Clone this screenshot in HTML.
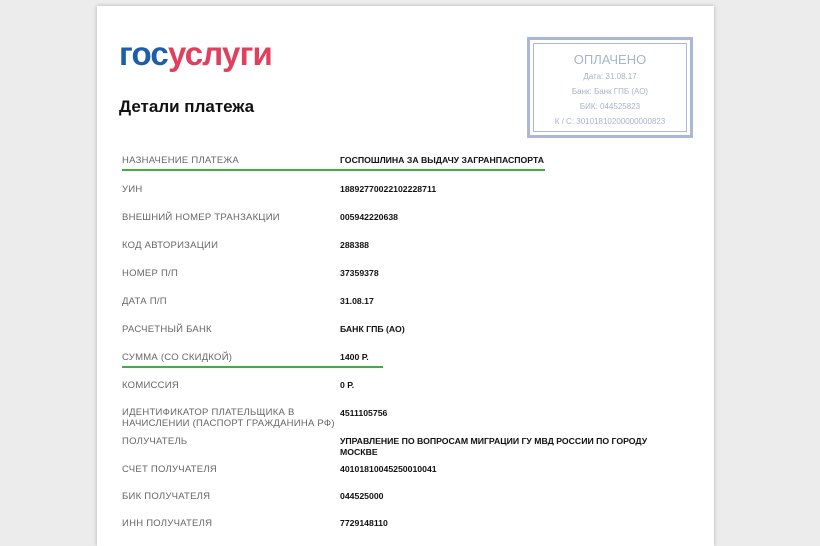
<!DOCTYPE html>
<html><head><meta charset="utf-8"><style>
body{margin:0;width:820px;height:534px;background:#ececec;overflow:hidden;font-family:"Liberation Sans","DejaVu Sans",sans-serif;position:relative}
.page{position:absolute;left:97px;top:6px;width:617px;height:540px;background:#fff;box-shadow:0 0 4px rgba(0,0,0,.25)}
.logo{position:absolute;left:119px;top:34px;font-size:33px;font-weight:bold;letter-spacing:-0.8px;line-height:40px}
.h1{position:absolute;left:119px;top:97px;font-size:17px;font-weight:bold;color:#111}
.stamp{position:absolute;left:527px;top:37px;width:160px;height:95px;border:3px solid #aab8d6;outline:1px solid #aab8d6;outline-offset:-7px;text-align:center;color:#a9b3c9;font-size:8px}
.l{position:absolute;left:122px;font-size:9.5px;letter-spacing:0.25px;color:#666;line-height:11px}
.v{position:absolute;left:340px;font-size:8.7px;font-weight:bold;color:#111;line-height:11px}
.g{position:absolute;left:122px;height:2px;background:#3cb043}
</style></head><body>
<div class="page"></div>
<div class="logo"><span style="color:#1e5ea8">гос</span><span style="color:#e0405e">услуги</span></div>
<div class="h1">Детали платежа</div>
<div class="stamp">
<div style="font-size:13px;margin-top:12px">ОПЛАЧЕНО</div>
<div style="margin-top:5px">Дата: 31.08.17</div>
<div style="margin-top:6px">Банк: Банк ГПБ (АО)</div>
<div style="margin-top:6px">БИК: 044525823</div>
<div style="margin-top:6px">К / С: 30101810200000000823</div>
</div>
<div class="l" style="top:155px">НАЗНАЧЕНИЕ ПЛАТЕЖА</div><div class="v" style="top:155px">ГОСПОШЛИНА ЗА ВЫДАЧУ ЗАГРАНПАСПОРТА</div>
<div class="g" style="top:169px;width:423px"></div>
<div class="l" style="top:184px">УИН</div><div class="v" style="top:184px">18892770022102228711</div>
<div class="l" style="top:212px">ВНЕШНИЙ НОМЕР ТРАНЗАКЦИИ</div><div class="v" style="top:212px">005942220638</div>
<div class="l" style="top:240px">КОД АВТОРИЗАЦИИ</div><div class="v" style="top:240px">288388</div>
<div class="l" style="top:268px">НОМЕР П/П</div><div class="v" style="top:268px">37359378</div>
<div class="l" style="top:296px">ДАТА П/П</div><div class="v" style="top:296px">31.08.17</div>
<div class="l" style="top:324px">РАСЧЕТНЫЙ БАНК</div><div class="v" style="top:324px">БАНК ГПБ (АО)</div>
<div class="l" style="top:352px">СУММА (СО СКИДКОЙ)</div><div class="v" style="top:352px">1400 Р.</div>
<div class="g" style="top:366px;width:261px"></div>
<div class="l" style="top:380px">КОМИССИЯ</div><div class="v" style="top:380px">0 Р.</div>
<div class="l" style="top:407px">ИДЕНТИФИКАТОР ПЛАТЕЛЬЩИКА В<br>НАЧИСЛЕНИИ (ПАСПОРТ ГРАЖДАНИНА РФ)</div><div class="v" style="top:408px">4511105756</div>
<div class="l" style="top:436px">ПОЛУЧАТЕЛЬ</div><div class="v" style="top:436px">УПРАВЛЕНИЕ ПО ВОПРОСАМ МИГРАЦИИ ГУ МВД РОССИИ ПО ГОРОДУ<br>МОСКВЕ</div>
<div class="l" style="top:464px">СЧЕТ ПОЛУЧАТЕЛЯ</div><div class="v" style="top:464px">40101810045250010041</div>
<div class="l" style="top:491px">БИК ПОЛУЧАТЕЛЯ</div><div class="v" style="top:491px">044525000</div>
<div class="l" style="top:518px">ИНН ПОЛУЧАТЕЛЯ</div><div class="v" style="top:518px">7729148110</div>
</body></html>
